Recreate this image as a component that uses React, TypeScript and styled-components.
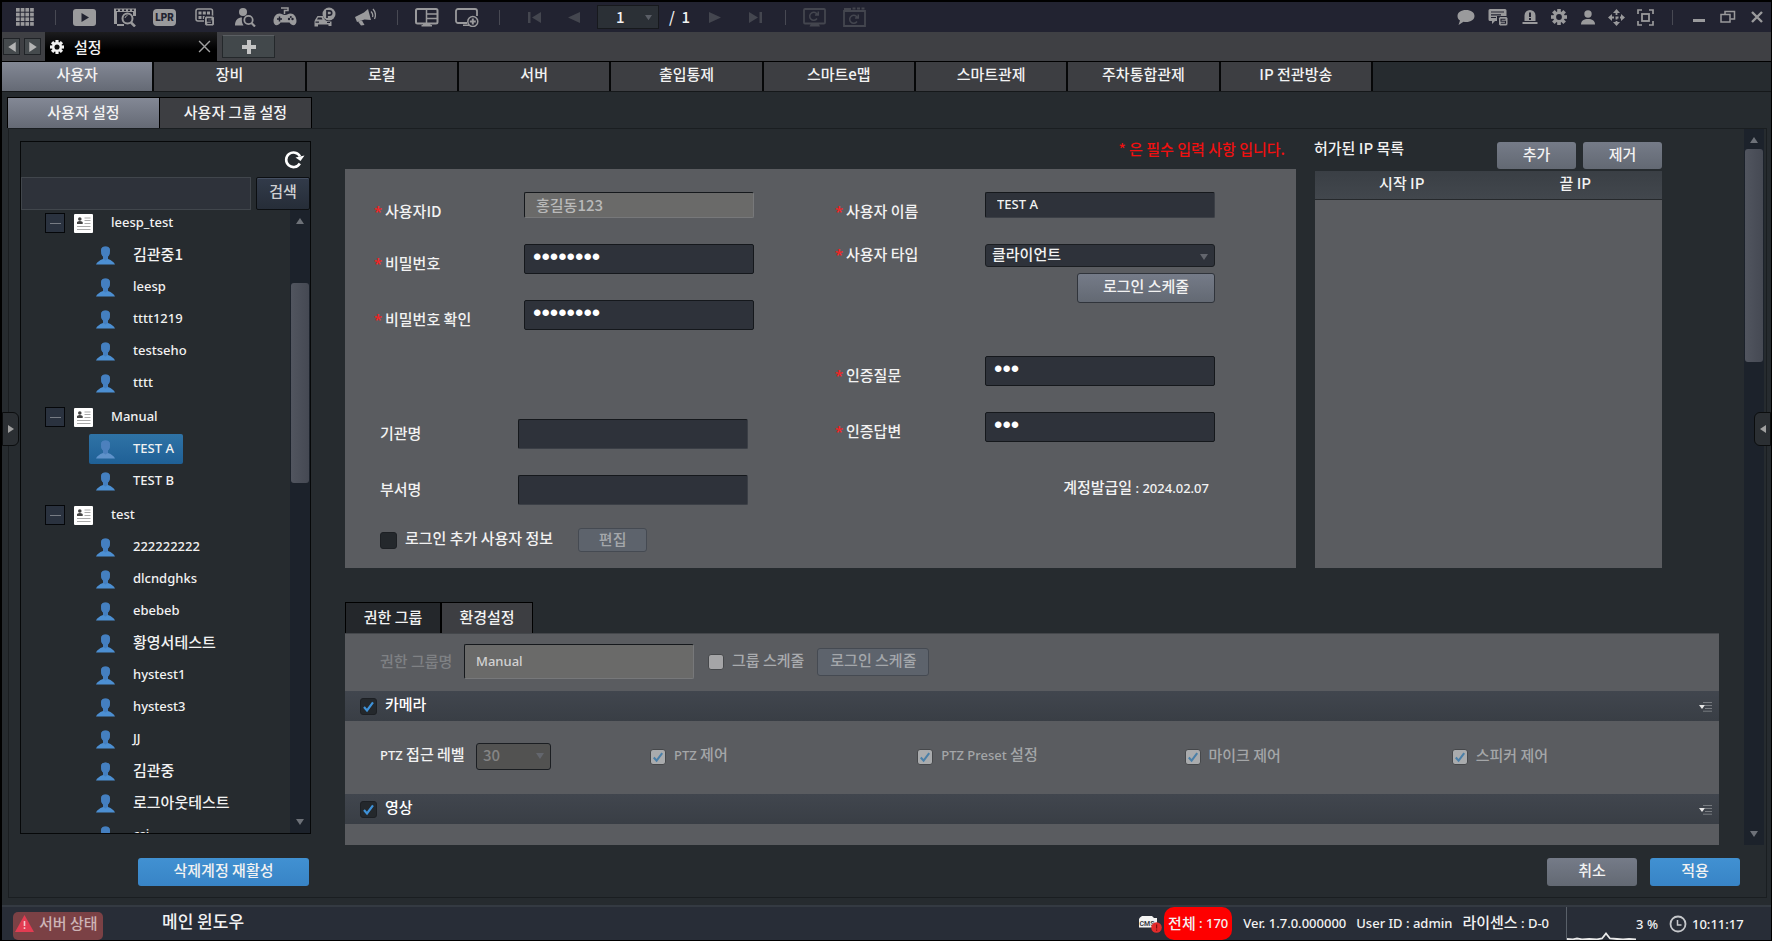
import React from 'react';
import styled, { createGlobalStyle, css } from 'styled-components';

const GlobalStyle = createGlobalStyle`
  *, *::before, *::after { box-sizing: border-box; }
  body {
    margin: 0;
    background: #262b2f;
    color: #f2f2f2;
    font: 500 15px/20px "Noto Sans CJK KR", "Noto Sans", sans-serif;
  }
  button, input, select { font: inherit; color: inherit; margin: 0; }
  button { cursor: pointer; padding: 0; border: 0; background: none; }
  input:focus-visible, select:focus-visible, button:focus-visible { outline: 1px solid #4a90d0; }
`;

/* ---------- shared ---------- */

const Latin = styled.span`
  font-family: "Noto Sans", "Noto Sans CJK KR", sans-serif;
  font-size: 13px;
`;

const steel = css`
  background: linear-gradient(#757b88, #636973);
`;

const Window = styled.div`
  position: relative;
  display: flex;
  flex-direction: column;
  height: 100vh;
  min-height: 640px;
  border: solid #000;
  border-width: 2px 1px 1px 2px;
  overflow: hidden;
`;

/* ---------- top tool bar ---------- */

const ToolBar = styled.header`
  display: flex;
  flex: none;
  height: 30px;
  padding-left: 3px;
  background: #222331;
`;

const ToolGroup = styled.div<{ $lead?: number; $trail?: number }>`
  display: flex;
  align-items: center;
  padding-left: ${p => p.$lead ?? 0}px;
  padding-right: ${p => p.$trail ?? 0}px;
`;

const RightGroup = styled(ToolGroup)`
  margin-left: auto;
`;

const ToolButton = styled.button<{ $w?: number; $dim?: boolean }>`
  display: flex;
  align-items: center;
  justify-content: center;
  width: ${p => p.$w ?? 40}px;
  height: 28px;
  color: ${p => (p.$dim ? '#44464f' : '#9a9a9c')};
`;

const Separator = styled.span<{ $w?: number }>`
  display: flex;
  align-items: center;
  justify-content: center;
  width: ${p => p.$w ?? 20}px;
  &::before {
    content: "";
    width: 1px;
    height: 15px;
    background: #484953;
  }
`;

const PageSelectBox = styled.span`
  position: relative;
  margin: 0 10px 0 3px;
  & > svg { position: absolute; right: 7px; top: 9px; color: #5a5e66; pointer-events: none; }
`;

const PageSelect = styled.select`
  appearance: none;
  display: block;
  width: 62px;
  height: 24px;
  padding: 0 24px 0 18px;
  border: 1px solid #17191d;
  background: #2b3036;
  line-height: 20px;
`;

const PageTotal = styled.span`
  width: 26px;
  white-space: nowrap;
`;

/* ---------- window tabs ---------- */

const WindowTabs = styled.div`
  display: flex;
  flex: none;
  align-items: center;
  height: 30px;
  padding-left: 1px;
  border-bottom: 1px solid #000;
  background: #3f4044;
`;

const StepButton = styled.button`
  display: flex;
  align-items: center;
  justify-content: center;
  width: 17px;
  height: 17px;
  margin-right: 4px;
  border: 1px solid #202327;
  background: #454a4d;
  color: #b4b4b4;
`;

const WindowTab = styled.div`
  display: flex;
  align-items: center;
  align-self: stretch;
  width: 172px;
  padding: 0 6px 0 5px;
  background: linear-gradient(#1c1c1e, #000 60%);
  & > button { margin-left: auto; color: #a0a0a0; line-height: 0; }
`;

const WindowTabTitle = styled.span`
  margin-left: 10px;
`;

const NewTab = styled.button`
  display: flex;
  align-items: center;
  justify-content: center;
  width: 53px;
  height: 23px;
  margin-left: 5px;
  border: 1px solid #24282b;
  border-top-color: #5b5f63;
  background: #42484b;
  color: #c4c4c4;
`;

/* ---------- tab strips ---------- */

const MainTabs = styled.nav`
  flex: none;
  border-bottom: 1px solid #15181a;
`;

const MainTabList = styled.div`
  display: flex;
  gap: 2px;
  max-width: 1371px;
  height: 29px;
  padding-right: 2px;
  background: #060708;
`;

const MainTab = styled.button<{ $on?: boolean }>`
  flex: 1;
  padding-bottom: 5px;
  background: ${p => (p.$on ? 'linear-gradient(#838895, #656a75)' : '#3d3e42')};
`;

const SubTabs = styled.nav`
  display: flex;
  flex: none;
  gap: 1px;
  margin: 5px 0 0 5px;
  width: max-content;
  border: 1px solid #000;
  border-bottom: 0;
  background: #000;
`;

const SubTab = styled.button<{ $on?: boolean }>`
  width: 151px;
  height: 30px;
  padding-bottom: 3px;
  background: ${p => (p.$on ? 'linear-gradient(#838895, #656a75)' : '#3d3e42')};
`;

/* ---------- work area ---------- */

const Work = styled.main`
  display: flex;
  flex: 1;
  flex-direction: column;
  min-height: 0;
  margin: 0 4px 7px 6px;
  border: 1px solid #1a1e21;
`;

const Columns = styled.div`
  display: flex;
  flex: 1;
  min-height: 0;
`;

const TreePanel = styled.aside`
  display: flex;
  flex: none;
  flex-direction: column;
  width: 291px;
  margin: 12px 0 11px 11px;
  border: 1px solid #060809;
`;

const TreeHead = styled.div`
  display: flex;
  justify-content: flex-end;
  align-items: center;
  height: 35px;
  padding-right: 5px;
  color: #fff;
  & > button { line-height: 0; }
`;

const SearchRow = styled.form`
  display: flex;
  gap: 5px;
  height: 33px;
`;

const SearchInput = styled.input`
  flex: 1;
  min-width: 0;
  padding: 0 8px;
  border: 1px solid #41464c;
  background: #2e323a;
`;

const SearchButton = styled.button`
  width: 54px;
  padding-bottom: 5px;
  border: 1px solid #0c0f12;
  border-radius: 2px;
  background: linear-gradient(#323b4a, #262d38);
  box-shadow: inset 0 1px 0 #465062;
  color: #cfd0d2;
`;

const TreeBody = styled.div`
  display: flex;
  flex: 1;
  min-height: 0;
`;

const TreeList = styled.div`
  flex: 1;
  overflow: hidden;
`;

const TreeScroll = styled.ul`
  display: flex;
  flex-direction: column;
  gap: 2px;
  margin: -3px 0 0;
  padding: 0;
  list-style: none;
`;

const Leaves = styled.ul`
  margin: 0;
  padding: 0;
  list-style: none;
`;

const GroupRow = styled.div`
  display: flex;
  align-items: center;
  height: 32px;
  padding-left: 24px;
`;

const Expander = styled.button`
  display: flex;
  align-items: center;
  justify-content: center;
  width: 20px;
  height: 20px;
  margin-right: 9px;
  border: 1px solid #05070a;
  background: #2a323f;
  &::before { content: ""; width: 11px; height: 1px; background: #777c84; }
`;

const GroupLabel = styled(Latin)`
  margin-left: 18px;
  padding-bottom: 2px;
`;

const LeafRow = styled.li`
  display: flex;
  align-items: center;
  height: 32px;
  padding-left: 68px;
`;

const Leaf = styled.button<{ $on?: boolean }>`
  display: flex;
  align-items: center;
  gap: 18px;
  height: 30px;
  padding: 0 9px 0 7px;
  border-radius: 2px;
  white-space: nowrap;
  background: ${p => (p.$on ? 'linear-gradient(#2f73a6, #1f6096)' : 'none')};
  & > span { padding-bottom: 2px; }
`;

const Track = styled.div`
  display: flex;
  flex: none;
  flex-direction: column;
  align-items: center;
  width: 20px;
  padding: 7px 1px;
  background: #1c222b;
  color: #6d7178;
`;

const Thumb = styled.span<{ $before: number; $size: number }>`
  flex: 0 1 ${p => p.$size}px;
  width: 18px;
  margin: ${p => p.$before}px 0 auto;
  border-radius: 3px;
  background: linear-gradient(90deg, #51555f, #454953);
`;

/* ---------- detail ---------- */

const Detail = styled.div`
  flex: 1;
  min-width: 0;
  display: flex;
  justify-content: space-between;
  padding: 0 2px 0 34px;
`;

const DetailBody = styled.div`
  flex: 1;
  min-width: 0;
  overflow: hidden;
  margin-right: 25px;
`;

const TopRow = styled.div`
  display: flex;
  gap: 19px;
  padding-right: 57px;
`;

const UserSection = styled.section`
  flex: 951 1 0;
  min-width: 0;
`;

const RequiredNote = styled.p`
  margin: 0;
  height: 40px;
  padding: 10px 11px 0 0;
  text-align: right;
  color: #f01010;
`;

const Card = styled.div`
  display: flex;
  height: 399px;
  padding: 23px 81px 0 29px;
  background: #5a5c60;
`;

const FormColumn = styled.div`
  flex: none;
`;

const RightColumn = styled(FormColumn)`
  margin-left: auto;
`;

const Fields = styled.div<{ $top?: number; $inset?: number }>`
  display: flex;
  flex-direction: column;
  gap: 26px;
  margin-top: ${p => p.$top ?? 0}px;
  padding-left: ${p => p.$inset ?? 0}px;
`;

const Field = styled.div<{ $h?: number; $drop?: number; $label?: number }>`
  display: flex;
  align-items: flex-start;
  height: ${p => p.$h ?? 30}px;
  & > label {
    width: ${p => p.$label ?? 150}px;
    padding-top: ${p => p.$drop ?? 9}px;
    white-space: nowrap;
  }
`;

const Star = styled.span`
  display: inline-block;
  width: 11px;
  font-family: "Noto Sans", sans-serif;
  font-weight: 600;
  color: #f02424;
`;

const TextInput = styled.input<{ $h?: number }>`
  width: 230px;
  height: ${p => p.$h ?? 30}px;
  padding: 0 11px 2px;
  border: 1px solid #15181c;
  border-right-color: #3b3f46;
  border-bottom-color: #3b3f46;
  border-radius: 2px;
  background: #2e323a;
  &:disabled {
    background: #6a6a69;
    color: #b9b9b9;
    border-right-color: #77787a;
    border-bottom-color: #77787a;
  }
`;

const LatinInput = styled(TextInput)`
  font-family: "Noto Sans", sans-serif;
  font-size: 13px;
  &:disabled { color: #d2d2d2; }
`;

const SecretInput = styled(TextInput)`
  padding: 0 8px 4px;
  border-color: #15181c;
  font-family: "Liberation Sans", sans-serif;
  font-size: 24px;
  color: #fff;
`;

const Stack = styled.div`
  display: flex;
  flex-direction: column;
  align-items: flex-end;
  gap: 6px;
`;

const SelectBox = styled.span`
  position: relative;
  display: block;
  & > svg { position: absolute; right: 7px; top: 9px; color: #63666d; pointer-events: none; }
`;

const Select = styled.select<{ $w: number; $h: number }>`
  appearance: none;
  display: block;
  width: ${p => p.$w}px;
  height: ${p => p.$h}px;
  padding: 0 20px 3px 6px;
  border: 1px solid #1b1e22;
  border-radius: 3px;
  background: #2e323a;
  line-height: 18px;
  &:disabled { background: #525251; color: #858585; opacity: 1; }
`;

const SteelButton = styled.button<{ $w: number; $h: number; $framed?: boolean }>`
  ${steel}
  width: ${p => p.$w}px;
  height: ${p => p.$h}px;
  padding-bottom: 4px;
  border-radius: 3px;
  line-height: 20px;
  white-space: nowrap;
  ${p => p.$framed && 'border: 1px solid #30343b;'}
  &:disabled { background: #5d636c; color: #a4a7ab; border-color: #454a52; }
`;

const BlueButton = styled.button<{ $w: number }>`
  width: ${p => p.$w}px;
  height: 28px;
  padding-bottom: 4px;
  border-radius: 3px;
  background: linear-gradient(#4191d2, #3884c6);
`;

const CheckRow = styled.div`
  display: flex;
  align-items: center;
  height: 24px;
  margin-top: 23px;
  padding-left: 6px;
  & > button { margin-left: 25px; padding-bottom: 2px; }
`;

const CheckLabel = styled.label`
  display: flex;
  align-items: center;
  gap: 8px;
  padding-bottom: 4px;
  white-space: nowrap;
`;

const Check = styled.input`
  && { margin: 4px 0 0; }
  appearance: none;
  flex: none;
  width: 17px;
  height: 17px;
  border: 1px solid #1d2024;
  border-radius: 3px;
  background: #24282c;
  &:checked {
    background: #24282c url("data:image/svg+xml,%3Csvg xmlns='http://www.w3.org/2000/svg' viewBox='0 0 15 15'%3E%3Cpath d='M3 8l3 3.4L12 3.4' fill='none' stroke='%233f92d8' stroke-width='2.2'/%3E%3C/svg%3E");
  }
  &:disabled {
    width: 16px;
    height: 16px;
    border: 1px solid #46484b;
    background-color: #a5a5a7;
  }
  &:disabled:checked {
    background: #a9abad url("data:image/svg+xml,%3Csvg xmlns='http://www.w3.org/2000/svg' viewBox='0 0 15 15'%3E%3Cpath d='M3 8l3 3.4L12 3.4' fill='none' stroke='%234a7fa8' stroke-width='2.2'/%3E%3C/svg%3E");
  }
`;

const IssueDate = styled.p`
  margin: 35px 6px 0 0;
  text-align: right;
`;

/* ---------- permitted addresses ---------- */

const IpSection = styled.section`
  flex: 347 1 0;
  min-width: 0;
`;

const IpHead = styled.div`
  display: flex;
  justify-content: flex-end;
  gap: 7px;
  height: 42px;
  padding-top: 13px;
`;

const IpTitle = styled.h2`
  margin: -4px auto 0 -1px;
  font: inherit;
  white-space: nowrap;
`;

const IpFrame = styled.div`
  height: 397px;
  background: #5a5c60;
`;

const IpTable = styled.table`
  width: 100%;
  table-layout: fixed;
  border-collapse: collapse;
  & th {
    height: 28px;
    padding: 0 0 3px;
    font-weight: inherit;
    border-bottom: 1px solid #26292c;
  }
  & thead { background: linear-gradient(#3a3f45, #42474d); }
`;

/* ---------- permission group ---------- */

const GroupSection = styled.section`
  margin-top: 34px;
`;

const GroupTabs = styled.div`
  display: flex;
  width: max-content;
  gap: 2px;
  border: 1px solid #000;
  border-bottom: 0;
  background: #000;
`;

const GroupTab = styled.button<{ $on?: boolean }>`
  width: ${p => (p.$on ? 94 : 90)}px;
  height: 30px;
  padding-bottom: 3px;
  background: ${p => (p.$on ? '#24272b' : '#3d3e42')};
`;

const GroupPanel = styled.div`
  height: 400px;
  background: #5a5c60;
  border-top: 1px solid #44474b;
`;

const GroupTop = styled.div`
  display: flex;
  align-items: center;
  height: 57px;
  padding: 0 0 2px 35px;
  color: #a9abae;
`;

const DimLabel = styled.label`
  width: 84px;
  padding-bottom: 2px;
  color: #7f8184;
  white-space: nowrap;
`;

const GroupCheck = styled(CheckLabel)`
  margin: 0 13px 0 14px;
`;

const SectionBar = styled.div`
  display: flex;
  align-items: center;
  justify-content: space-between;
  height: 30px;
  padding: 0 6px 0 15px;
  background: linear-gradient(#41464e, #393e45);
  color: #fff;
`;

const PtzRow = styled.div`
  display: grid;
  grid-template-columns: 270px repeat(4, 1fr);
  align-items: center;
  height: 73px;
  padding: 0 0 2px 35px;
  color: #a4a6a8;
`;

const PtzLevel = styled.div`
  display: flex;
  align-items: center;
  gap: 8px;
  & > label { width: 88px; padding-bottom: 4px; color: #f2f2f2; white-space: nowrap; }
`;

/* ---------- footer ---------- */

const Actions = styled.div`
  display: flex;
  flex: none;
  align-items: flex-start;
  gap: 13px;
  height: 52px;
  padding: 13px 26px 0 129px;
`;

const ActionSpacer = styled.span`
  flex: 1;
`;

const StatusBar = styled.footer`
  display: flex;
  flex: none;
  align-items: center;
  height: 35px;
  padding-left: 11px;
  border-top: 2px solid #343a42;
  background: #282d37;
  white-space: nowrap;
`;

const ServerState = styled.button`
  display: flex;
  align-items: center;
  gap: 5px;
  align-self: flex-end;
  width: 90px;
  height: 28px;
  padding: 0 2px 6px;
  border-radius: 5px;
  background: #7b4145;
  color: #cdb4b6;
`;

const WindowName = styled.span`
  margin: 0 auto 6px 59px;
  font-size: 17px;
`;

const TotalBadge = styled.span`
  display: flex;
  align-items: center;
  justify-content: center;
  width: 68px;
  align-self: stretch;
  margin: 0 11px 0 2px;
  padding-bottom: 2px;
  border-radius: 10px;
  background: #fe0000;
`;

const StatusItem = styled.span`
  margin-right: 10px;
  padding-bottom: 2px;
`;

const Cpu = styled.div`
  display: flex;
  align-items: center;
  justify-content: flex-end;
  align-self: stretch;
  position: relative;
  width: 92px;
  margin: 0 11px 0 7px;
  border-left: 1px solid #596069;
  & > svg { position: absolute; left: 0; bottom: 0; }
`;

const Clock = styled.span`
  display: flex;
  align-items: center;
  gap: 5px;
  width: 102px;
`;

const Handle = styled.button<{ $side: 'left' | 'right' }>`
  position: absolute;
  top: 410px;
  ${p => p.$side}: 0;
  display: flex;
  align-items: center;
  justify-content: center;
  width: 17px;
  height: 34px;
  border: 1px solid #0b0d0e;
  border-radius: ${p => (p.$side === 'left' ? '0 6px 6px 0' : '6px 0 0 6px')};
  background: #2b2f33;
  color: #a0a0a0;
`;

/* ---------- drawings ---------- */

type IconProps = { w?: number; h?: number; children: React.ReactNode };
const Icon = ({ w = 24, h = 20, children }: IconProps) => (
  <svg width={w} height={h} viewBox={`0 0 ${w} ${h}`} fill="currentColor" aria-hidden="true">
    {children}
  </svg>
);

const Tri = ({ dir, size = 8 }: { dir: 'up' | 'down' | 'left' | 'right'; size?: number }) => {
  const d = {
    up: 'M0 7L4 1L8 7Z',
    down: 'M0 1L8 1L4 7Z',
    left: 'M7 0L1 4L7 8Z',
    right: 'M1 0L7 4L1 8Z',
  }[dir];
  return (
    <svg width={size} height={size} viewBox="0 0 8 8" fill="currentColor" aria-hidden="true">
      <path d={d} />
    </svg>
  );
};

const line = { fill: 'none', stroke: 'currentColor' };
const BAR = '#222331';

const AppsIcon = () => (
  <Icon w={18} h={18}>
    {[0, 1, 2, 3].map(r =>
      [0, 1, 2, 3].map(c => <rect key={`${r}${c}`} x={c * 4.7} y={r * 4.7} width={3.7} height={3.7} />),
    )}
  </Icon>
);
const PlayIcon = () => (
  <Icon><rect x="0" y="2" width="23" height="17" rx="3" /><path d="M8.5 6L16 10.5L8.5 15Z" fill={BAR} /></Icon>
);
const FilmSearchIcon = () => (
  <Icon>
    <path d="M1 1.5H23V5H1Z M1 5V19H4V5Z M20 5V9H23V5Z M1 17H11V19H1Z" />
    <path d="M3 2.5h2v1.5h-2z M7 2.5h2v1.5h-2z M11 2.5h2v1.5h-2z M15 2.5h2v1.5h-2z M19 2.5h2v1.5h-2z" fill={BAR} />
    <circle cx="14.5" cy="11.5" r="5" {...line} strokeWidth="2" />
    <path d="M12 11a3 3 0 0 1 2.5-2.5" {...line} />
    <path d="M18 15.5L22 19.5" {...line} strokeWidth="2.5" />
  </Icon>
);
const LprIcon = () => (
  <Icon>
    <rect x="0" y="2" width="23" height="17" rx="4" />
    <text x="11.5" y="14" textAnchor="middle" fontSize="10" fontWeight="900" fontFamily="Roboto, sans-serif" fill={BAR}>LPR</text>
  </Icon>
);
const GridSIcon = () => (
  <Icon w={20}>
    <rect x="1" y="2" width="16.500" height="12" rx="2" {...line} strokeWidth="1.5" />
    <path d="M3.500 4.500h3v3h-3z M7.800 4.500h3v3h-3z M12 4.500h3v3h-3z M3.500 9h3v3h-3z M7.800 9h2v3h-2z" />
    <rect x="9.500" y="9" width="10" height="10" rx="2" stroke={BAR} />
    <path d="M16.500 12H12.500V14H16.500V16.300H12.300" fill="none" stroke={BAR} strokeWidth="1.300" />
  </Icon>
);
const UserSearchIcon = () => (
  <Icon w={22}>
    <circle cx="9" cy="5" r="4" />
    <path d="M1 18.500C1 13 4 10.500 8 10.500C7.500 13.500 8 16.500 9.500 18.500Z" />
    <circle cx="14.500" cy="13" r="4.200" {...line} strokeWidth="1.800" />
    <path d="M17.500 16L21 19.500" {...line} strokeWidth="2.200" />
  </Icon>
);
const GamepadIcon = () => (
  <Icon>
    <path d="M8 1H15V3.500H11.500V7" {...line} strokeWidth="1.500" />
    <path d="M6.500 6.500C9 6.500 9.500 8 12 8S15 6.500 17.500 6.500C21 6.500 23.500 10 23.500 14C23.500 19 19 19.500 16.500 15.500H7.500C5 19.500 .5 19 .5 14C.5 10 3 6.500 6.500 6.500Z" />
    <path d="M6.500 9.500V14.500M4 12H9" stroke={BAR} strokeWidth="1.500" />
    <circle cx="16" cy="12" r="1.200" fill={BAR} /><circle cx="19.500" cy="12" r="1.200" fill={BAR} /><circle cx="17.800" cy="10" r="1" fill={BAR} />
  </Icon>
);
const ParkingIcon = () => (
  <Icon>
    <path d="M2 13L4.500 9H10C11 13 14 15 18.500 14.500V19H15.500V17.500H5V19.500H1.500V14.500Z" />
    <path d="M5 10.500H8.500L9.500 12.500H4Z" fill={BAR} />
    <path d="M2.500 14.500h3.500v1.300h-3.500z M14 15h3v1h-3z" fill={BAR} />
    <circle cx="16" cy="7" r="6.500" />
    <path d="M14 11V3.800H16.500A2.200 2.200 0 0 1 16.500 8.200H14" fill="none" stroke={BAR} strokeWidth="1.700" />
  </Icon>
);
const MegaphoneIcon = () => (
  <Icon w={22}>
    <path d="M1 10L10 5.500L14 2L17 13L10.500 12.500L3 15Z" />
    <path d="M4 14.500L8 13.500L10.500 18L7 18.500Z" />
    <path d="M17 4.500Q19.500 7 18.500 10M19 2Q23 6.500 20.500 12" {...line} strokeWidth="1.300" />
  </Icon>
);
const LayoutIcon = () => (
  <Icon>
    <rect x="1" y="2" width="21.500" height="14.500" rx="1.500" {...line} strokeWidth="2" />
    <path d="M11.500 2V16M11.500 7H22M11.500 11.500H22" {...line} strokeWidth="1.500" />
    <path d="M8 16H15.500V18H17V19.500H6.500V18H8Z" />
  </Icon>
);
const ScreenAddIcon = () => (
  <Icon>
    <path d="M12 16H3A2 2 0 0 1 1 14V4A2 2 0 0 1 3 2H20A2 2 0 0 1 22 4V9" {...line} strokeWidth="1.800" />
    <path d="M8 17.500h6v1.500h-6z" />
    <circle cx="17.800" cy="14.500" r="5" {...line} strokeWidth="1.500" />
    <path d="M17.800 11.500V17.500M14.800 14.500H20.800" {...line} strokeWidth="2" />
  </Icon>
);
const ReloadMark = ({ cx, cy }: { cx: number; cy: number }) => (
  <path d={`M${cx + 3.500} ${cy - 1}A4 4 0 1 0 ${cx + 3} ${cy + 2.500}M${cx + 4.300} ${cy - 4.500}V${cy - 1}H${cx + 1}`} {...line} strokeWidth="1.500" />
);
const ScreenReloadIcon = () => (
  <Icon>
    <rect x="1" y="2" width="21" height="14.500" rx="1" {...line} strokeWidth="1.800" />
    <path d="M8 16.500H15.500L17 19.500H6.500Z" /><ReloadMark cx={11} cy={9} />
  </Icon>
);
const ClipReloadIcon = () => (
  <Icon>
    <path d="M1 4H22V19H1Z" {...line} strokeWidth="1.800" />
    <path d="M1 1h7v2.500h-7z M9.500 .5h3v2h-3z M14 .5h3v2h-3z M18.500 .5h3v2h-3z" /><ReloadMark cx={11} cy={12} />
  </Icon>
);
const ChatIcon = () => (
  <Icon w={18} h={17}><path d="M9 1C14 1 17.500 3.500 17.500 7S14 13 9 13C8 13 7.500 13 6.500 12.800L1.500 16L3 11.500C1.500 10.500 .5 9 .5 7C.5 3.500 4 1 9 1Z" /></Icon>
);
const ChatLinkIcon = () => (
  <Icon w={21} h={19}>
    <path d="M2 1H17A1.500 1.500 0 0 1 18.500 2.500V8H9V13H7L4 16V13H2A1.500 1.500 0 0 1 .5 11.500V2.500A1.500 1.500 0 0 1 2 1Z" />
    <path d="M3 4H16M3 6.800H13M3 9.500H8" stroke={BAR} strokeWidth="1.200" />
    <rect x="10.500" y="8.500" width="9.500" height="9.500" rx="2" stroke={BAR} />
    <path d="M17.500 11.300H13V13.200H17.500V15.300H12.800" fill="none" stroke={BAR} strokeWidth="1.100" />
  </Icon>
);
const SirenIcon = () => (
  <Icon w={16} h={16}>
    <path d="M2.500 12V6.500A5.500 5.500 0 0 1 13.500 6.500V12Z M.5 13H15.500V15H.5Z" />
    <path d="M7 3.500h2v4.500h-2z M7 9h2v2h-2z" fill={BAR} />
  </Icon>
);
const GearIcon = ({ hole = BAR, s = 16 }: { hole?: string; s?: number }) => (
  <svg width={s} height={s} viewBox="0 0 16 16" fill="currentColor" aria-hidden="true">
    {[0, 45, 90, 135].map(a => <rect key={a} x="6.200" y="0" width="3.600" height="16" transform={`rotate(${a} 8 8)`} />)}
    <circle cx="8" cy="8" r="5.700" /><circle cx="8" cy="8" r="2.900" fill={hole} />
  </svg>
);
const PersonIcon = () => (
  <Icon w={14} h={15}><circle cx="7" cy="4" r="3.700" /><path d="M0 14.500C0 10.500 3 9 7 9S14 10.500 14 14.500Z" /></Icon>
);
const MoveIcon = () => (
  <Icon w={17} h={17}>
    <path d="M8.500 0L12 4H5Z M8.500 17L5 13H12Z M0 8.500L4 5V12Z M17 8.500L13 12V5Z" />
    <path d="M8.500 3V14M3 8.500H14" {...line} strokeWidth="1.800" strokeDasharray="3 1.500" />
  </Icon>
);
const FrameIcon = () => (
  <Icon w={17} h={17}>
    <path d="M1 5V1H5M12 1H16V5M16 12V16H12M5 16H1V12" {...line} strokeWidth="1.700" />
    <rect x="5" y="5" width="7" height="7" {...line} strokeWidth="1.800" />
  </Icon>
);
const MinimizeIcon = () => <Icon w={12} h={12}><rect x="0" y="8" width="12" height="3" /></Icon>;
const RestoreIcon = () => (
  <Icon w={16} h={14}>
    <rect x="1" y="4.500" width="9" height="7.500" {...line} strokeWidth="1.500" />
    <path d="M5 4V1.500H14.500V9H10.500" {...line} strokeWidth="1.500" />
  </Icon>
);
const CloseIcon = ({ s = 12, t = 2.4 }: { s?: number; t?: number }) => (
  <svg width={s} height={s} viewBox="0 0 12 12" aria-hidden="true">
    <path d="M1 1L11 11M11 1L1 11" {...line} strokeWidth={t} />
  </svg>
);
const FirstIcon = () => <Icon w={13} h={11}><path d="M0 0h2.500v11h-2.500z M13 0V11L4 5.500Z" /></Icon>;
const LastIcon = () => <Icon w={13} h={11}><path d="M10.500 0h2.500v11h-2.500z M0 0V11L9 5.500Z" /></Icon>;
const PrevIcon = () => <Icon w={12} h={11}><path d="M12 0V11L0 5.500Z" /></Icon>;
const NextIcon = () => <Icon w={12} h={11}><path d="M0 0V11L12 5.500Z" /></Icon>;
const PlusIcon = () => <Icon w={14} h={14}><path d="M5 0h4v5h5v4h-5v5h-4v-5h-5v-4h5z" /></Icon>;
const RefreshIcon = () => (
  <Icon w={21} h={19}>
    <path d="M15.800 13.500A7.300 7.300 0 1 1 16 6.500" {...line} strokeWidth="2.600" />
    <path d="M11.500 7.500L20.500 5.500L16.500 11Z" />
  </Icon>
);
const CardIcon = () => (
  <svg width="19" height="19" viewBox="0 0 19 19" aria-hidden="true">
    <rect width="19" height="19" rx="1" fill="#fff" />
    <circle cx="5.800" cy="5" r="1.800" fill="#444" /><path d="M3 10V8Q5.800 6 8.700 8V10Z" fill="#444" />
    <path d="M10.500 4H16.500M10.500 6.500H16.500M10.500 9.500H16.500M3 12.500H16.500M3 15.500H16.500" stroke="#a9a9a9" />
  </svg>
);
const UserIcon = ({ on }: { on?: boolean }) => (
  <svg width="19" height="19" viewBox="0 0 19 19" fill={on ? '#5f92ca' : '#4c8fd2'} aria-hidden="true">
    <path d="M5 4.500Q5 .5 9.500 .5T14 4.500Q14 9 12 10.500V13Q17.500 15 19 18.500H0Q1.500 15 7 13V10.500Q5 9 5 4.500Z" />
    <path d="M5 4.500Q5 .5 9.500 .5T14 4.500Q14 9 12 10.500V13L9.500 14.500L7 13V10.500Q5 9 5 4.500Z" fill="#3f74b4" opacity=".6" />
  </svg>
);
const FoldIcon = () => (
  <svg width="14" height="11" viewBox="0 0 14 11" aria-hidden="true">
    <path d="M4 1.500H13M6 4.500H13M6 7.500H13M4 10.200H13" stroke="#777b80" />
    <path d="M0 4H6L3 8Z" fill="#e6e6e6" />
  </svg>
);
const AlertIcon = () => (
  <svg width="19" height="17" viewBox="0 0 19 17" aria-hidden="true">
    <path d="M9.500 0L19 17H0Z" fill="#e23c52" /><path d="M8.700 6h1.600v5h-1.600z M8.700 12.300h1.600v1.700h-1.600z" fill="#f3c9cd" />
  </svg>
);
const CmsIcon = () => (
  <svg width="23" height="18" viewBox="0 0 23 18" aria-hidden="true">
    <path d="M1 2.500L3 1H13L15 3H18V12.500H0V4Z" fill="#f4f4f4" />
    <text x="8" y="10.500" textAnchor="middle" fontSize="7" fontWeight="700" fontFamily="Roboto, sans-serif" fill="#3a3d44">CMS</text>
    <circle cx="17.500" cy="12.500" r="5.300" fill="#e32b2b" /><path d="M17 9.500h1.200v4h-1.200z M17 14.500h1.200v1.200h-1.200z" fill="#7c1010" />
  </svg>
);
const LoadGraph = () => (
  <svg width="69" height="9" viewBox="0 0 69 9" aria-hidden="true">
    <path d="M0 8L6 8.300L10 7.500L15 8.300L22 8L30 8.300L35 7.500L39 2.500L43 7.500L50 8L56 8.300L62 8L69 8.300" fill="none" stroke="#e9e9e9" strokeWidth="1.800" />
  </svg>
);
const ClockIcon = () => (
  <svg width="18" height="18" viewBox="0 0 18 18" aria-hidden="true">
    <circle cx="9" cy="9" r="7.500" fill="none" stroke="#c6c8cb" strokeWidth="1.800" />
    <path d="M8.500 5V10H12.500" fill="none" stroke="#c6c8cb" strokeWidth="1.500" />
  </svg>
);

/* ---------- data ---------- */

const mainTabs = ['사용자', '장비', '로컬', '서버', '출입통제', '스마트e맵', '스마트관제', '주차통합관제', 'IP 전관방송'];

const groups = [
  { name: 'leesp_test', users: ['김관중1', 'leesp', 'tttt1219', 'testseho', 'tttt'] },
  { name: 'Manual', users: ['TEST A', 'TEST B'] },
  {
    name: 'test',
    users: ['222222222', 'dlcndghks', 'ebebeb', '황영서테스트', 'hystest1', 'hystest3', 'JJ', '김관중', '로그아웃테스트', 'csj'],
  },
];
const isLatin = (s: string) => /^[\x20-\x7e]+$/.test(s);

const leftTools: [string, React.ReactNode][] = [
  ['재생', <PlayIcon />], ['영상 검색', <FilmSearchIcon />], ['LPR', <LprIcon />], ['스마트', <GridSIcon />],
  ['인물 검색', <UserSearchIcon />], ['조이스틱', <GamepadIcon />], ['주차', <ParkingIcon />], ['방송', <MegaphoneIcon />],
];
const statusTools: [string, React.ReactNode][] = [
  ['알람', <SirenIcon />], ['설정', <GearIcon />], ['사용자', <PersonIcon />], ['이동', <MoveIcon />], ['전체 화면', <FrameIcon />],
];
const windowTools: [string, React.ReactNode][] = [
  ['최소화', <MinimizeIcon />], ['복원', <RestoreIcon />], ['닫기', <CloseIcon />],
];

/* ---------- app ---------- */

export default function App() {
  return (
    <Window>
      <GlobalStyle />

      <ToolBar>
        <ToolGroup><ToolButton aria-label="메뉴"><AppsIcon /></ToolButton></ToolGroup>
        <Separator />
        <ToolGroup $trail={2}>
          {leftTools.map(([name, icon]) => <ToolButton key={name} aria-label={name}>{icon}</ToolButton>)}
        </ToolGroup>
        <Separator />
        <ToolGroup $trail={2}>
          <ToolButton aria-label="화면 분할"><LayoutIcon /></ToolButton>
          <ToolButton aria-label="화면 추가"><ScreenAddIcon /></ToolButton>
        </ToolGroup>
        <Separator />
        <ToolGroup $lead={5}>
          <ToolButton $dim aria-label="처음"><FirstIcon /></ToolButton>
          <ToolButton $dim aria-label="이전"><PrevIcon /></ToolButton>
          <PageSelectBox>
            <PageSelect aria-label="페이지" defaultValue="1"><option>1</option></PageSelect>
            <Tri dir="down" size={7} />
          </PageSelectBox>
          <PageTotal>/&nbsp; 1</PageTotal>
          <ToolButton $dim aria-label="다음"><NextIcon /></ToolButton>
          <ToolButton $dim aria-label="마지막"><LastIcon /></ToolButton>
        </ToolGroup>
        <Separator />
        <ToolGroup>
          <ToolButton $dim aria-label="화면 갱신"><ScreenReloadIcon /></ToolButton>
          <ToolButton $dim aria-label="영상 갱신"><ClipReloadIcon /></ToolButton>
        </ToolGroup>
        <RightGroup>
          <ToolButton $w={33} aria-label="대화"><ChatIcon /></ToolButton>
          <ToolButton $w={33} aria-label="메시지"><ChatLinkIcon /></ToolButton>
          {statusTools.map(([name, icon]) => <ToolButton key={name} $w={29} aria-label={name}>{icon}</ToolButton>)}
          <Separator $w={24} />
          {windowTools.map(([name, icon]) => <ToolButton key={name} $w={29} aria-label={name}>{icon}</ToolButton>)}
        </RightGroup>
      </ToolBar>

      <WindowTabs>
        <StepButton aria-label="이전 탭"><Tri dir="left" size={10} /></StepButton>
        <StepButton aria-label="다음 탭"><Tri dir="right" size={10} /></StepButton>
        <WindowTab>
          <GearIcon hole="#0a0a0a" s={14} />
          <WindowTabTitle>설정</WindowTabTitle>
          <button aria-label="탭 닫기"><CloseIcon s={13} t={1.3} /></button>
        </WindowTab>
        <NewTab aria-label="새 탭"><PlusIcon /></NewTab>
      </WindowTabs>

      <MainTabs>
        <MainTabList>
          {mainTabs.map((t, i) => <MainTab key={t} $on={i === 0}>{t}</MainTab>)}
        </MainTabList>
      </MainTabs>
      <SubTabs>
        <SubTab $on>사용자 설정</SubTab>
        <SubTab>사용자 그룹 설정</SubTab>
      </SubTabs>

      <Work>
        <Columns>
          <TreePanel>
            <TreeHead><button aria-label="새로 고침"><RefreshIcon /></button></TreeHead>
            <SearchRow onSubmit={e => e.preventDefault()}>
              <SearchInput type="text" aria-label="검색어" />
              <SearchButton>검색</SearchButton>
            </SearchRow>
            <TreeBody>
              <TreeList>
                <TreeScroll>
                  {groups.map(g => (
                    <li key={g.name}>
                      <GroupRow>
                        <Expander aria-label={`${g.name} 접기`} />
                        <CardIcon />
                        <GroupLabel>{g.name}</GroupLabel>
                      </GroupRow>
                      <Leaves>
                        {g.users.map(u => (
                          <LeafRow key={u}>
                            <Leaf $on={u === 'TEST A'}>
                              <UserIcon on={u === 'TEST A'} />
                              {isLatin(u) ? <Latin>{u}</Latin> : <span>{u}</span>}
                            </Leaf>
                          </LeafRow>
                        ))}
                      </Leaves>
                    </li>
                  ))}
                </TreeScroll>
              </TreeList>
              <Track>
                <Tri dir="up" />
                <Thumb $before={58} $size={200} />
                <Tri dir="down" />
              </Track>
            </TreeBody>
          </TreePanel>

          <Detail>
            <DetailBody>
              <TopRow>
                <UserSection>
                  <RequiredNote>* 은 필수 입력 사항 입니다.</RequiredNote>
                  <Card>
                    <FormColumn>
                      <Fields>
                        <Field $h={26}>
                          <label htmlFor="uid"><Star>*</Star>사용자ID</label>
                          <TextInput id="uid" $h={26} defaultValue="홍길동123" disabled />
                        </Field>
                        <Field>
                          <label htmlFor="pw"><Star>*</Star>비밀번호</label>
                          <SecretInput id="pw" type="password" defaultValue="password" />
                        </Field>
                        <Field>
                          <label htmlFor="pw2"><Star>*</Star>비밀번호 확인</label>
                          <SecretInput id="pw2" type="password" defaultValue="password" />
                        </Field>
                      </Fields>
                      <Fields $top={89} $inset={6}>
                        <Field $drop={4} $label={138}>
                          <label htmlFor="org">기관명</label>
                          <TextInput id="org" />
                        </Field>
                        <Field $drop={4} $label={138}>
                          <label htmlFor="dept">부서명</label>
                          <TextInput id="dept" />
                        </Field>
                      </Fields>
                      <CheckRow>
                        <CheckLabel><Check type="checkbox" />로그인 추가 사용자 정보</CheckLabel>
                        <SteelButton $w={69} $h={24} $framed disabled>편집</SteelButton>
                      </CheckRow>
                    </FormColumn>
                    <RightColumn>
                      <Fields>
                        <Field $h={26}>
                          <label htmlFor="uname"><Star>*</Star>사용자 이름</label>
                          <LatinInput id="uname" $h={26} defaultValue="TEST A" />
                        </Field>
                        <Field $h={59} $drop={0}>
                          <label htmlFor="utype"><Star>*</Star>사용자 타입</label>
                          <Stack>
                            <SelectBox>
                              <Select id="utype" $w={230} $h={23} defaultValue="클라이언트"><option>클라이언트</option></Select>
                              <Tri dir="down" />
                            </SelectBox>
                            <SteelButton $w={138} $h={30} $framed>로그인 스케줄</SteelButton>
                          </Stack>
                        </Field>
                      </Fields>
                      <Fields $top={53}>
                        <Field>
                          <label htmlFor="question"><Star>*</Star>인증질문</label>
                          <SecretInput id="question" type="password" defaultValue="abc" />
                        </Field>
                        <Field>
                          <label htmlFor="answer"><Star>*</Star>인증답변</label>
                          <SecretInput id="answer" type="password" defaultValue="abc" />
                        </Field>
                      </Fields>
                      <IssueDate>계정발급일 <Latin>: 2024.02.07</Latin></IssueDate>
                    </RightColumn>
                  </Card>
                </UserSection>

                <IpSection>
                  <IpHead>
                    <IpTitle>허가된 IP 목록</IpTitle>
                    <SteelButton $w={79} $h={27}>추가</SteelButton>
                    <SteelButton $w={79} $h={27}>제거</SteelButton>
                  </IpHead>
                  <IpFrame>
                    <IpTable>
                      <thead><tr><th scope="col">시작 IP</th><th scope="col">끝 IP</th></tr></thead>
                      <tbody />
                    </IpTable>
                  </IpFrame>
                </IpSection>
              </TopRow>

              <GroupSection>
                <GroupTabs>
                  <GroupTab $on>권한 그룹</GroupTab>
                  <GroupTab>환경설정</GroupTab>
                </GroupTabs>
                <GroupPanel>
                  <GroupTop>
                    <DimLabel htmlFor="gname">권한 그룹명</DimLabel>
                    <LatinInput id="gname" $h={35} defaultValue="Manual" disabled />
                    <GroupCheck><Check type="checkbox" disabled />그룹 스케줄</GroupCheck>
                    <SteelButton $w={112} $h={28} $framed disabled>로그인 스케줄</SteelButton>
                  </GroupTop>
                  <SectionBar>
                    <CheckLabel><Check type="checkbox" defaultChecked />카메라</CheckLabel>
                    <button aria-label="카메라 접기"><FoldIcon /></button>
                  </SectionBar>
                  <PtzRow>
                    <PtzLevel>
                      <label htmlFor="level"><Latin>PTZ</Latin> 접근 레벨</label>
                      <SelectBox>
                        <Select id="level" $w={75} $h={27} defaultValue="30" disabled><option>30</option></Select>
                        <Tri dir="down" />
                      </SelectBox>
                    </PtzLevel>
                    <CheckLabel><Check type="checkbox" defaultChecked disabled /><span><Latin>PTZ</Latin> 제어</span></CheckLabel>
                    <CheckLabel><Check type="checkbox" defaultChecked disabled /><span><Latin>PTZ Preset</Latin> 설정</span></CheckLabel>
                    <CheckLabel><Check type="checkbox" defaultChecked disabled />마이크 제어</CheckLabel>
                    <CheckLabel><Check type="checkbox" defaultChecked disabled />스피커 제어</CheckLabel>
                  </PtzRow>
                  <SectionBar>
                    <CheckLabel><Check type="checkbox" defaultChecked />영상</CheckLabel>
                    <button aria-label="영상 접기"><FoldIcon /></button>
                  </SectionBar>
                </GroupPanel>
              </GroupSection>
            </DetailBody>
            <Track>
              <Tri dir="up" />
              <Thumb $before={5} $size={213} />
              <Tri dir="down" />
            </Track>
          </Detail>
        </Columns>
        <Actions>
          <BlueButton $w={171}>삭제계정 재활성</BlueButton>
          <ActionSpacer />
          <SteelButton $w={90} $h={28}>취소</SteelButton>
          <BlueButton $w={90}>적용</BlueButton>
        </Actions>
      </Work>

      <StatusBar>
        <ServerState><AlertIcon />서버 상태</ServerState>
        <WindowName>메인 윈도우</WindowName>
        <CmsIcon />
        <TotalBadge>전체&nbsp;<Latin>: 170</Latin></TotalBadge>
        <StatusItem><Latin>Ver. 1.7.0.000000</Latin></StatusItem>
        <StatusItem><Latin>User ID : admin</Latin></StatusItem>
        <StatusItem>라이센스 <Latin>: D-0</Latin></StatusItem>
        <Cpu><LoadGraph /><Latin>3 %</Latin></Cpu>
        <Clock><ClockIcon /><Latin>10:11:17</Latin></Clock>
      </StatusBar>

      <Handle $side="left" aria-label="왼쪽 패널 열기"><Tri dir="right" /></Handle>
      <Handle $side="right" aria-label="오른쪽 패널 열기"><Tri dir="left" /></Handle>
    </Window>
  );
}
